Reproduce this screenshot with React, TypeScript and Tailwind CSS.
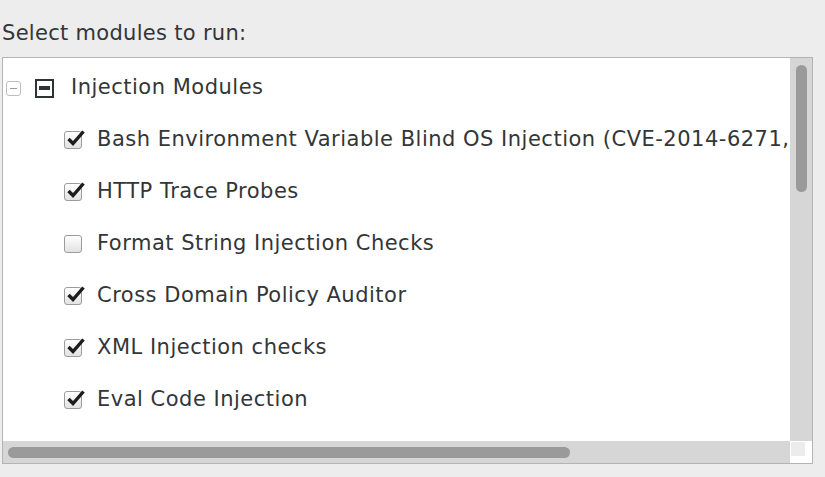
import React from 'react';

const modules: { label: string; checked: boolean }[] = [
  { label: 'Bash Environment Variable Blind OS Injection (CVE-2014-6271, CVE-2014-7169)', checked: true },
  { label: 'HTTP Trace Probes', checked: true },
  { label: 'Format String Injection Checks', checked: false },
  { label: 'Cross Domain Policy Auditor', checked: true },
  { label: 'XML Injection checks', checked: true },
  { label: 'Eval Code Injection', checked: true },
  { label: 'LDAP Injection', checked: false },
];

function CheckBox({ checked }: { checked: boolean }) {
  return (
    <span className="relative flex h-[18px] w-[18px] shrink-0 rounded-[3px] border border-[#9c9c9c] bg-gradient-to-b from-white to-[#e2e2e2]">
      {checked && (
        <svg className="absolute left-[1px] top-[-3px]" width="20" height="18" viewBox="0 0 20 18">
          <path d="M2.5 10 L7 14.5 L17.5 2.5" fill="none" stroke="#1c1c1c" strokeWidth="3.4" strokeLinejoin="miter" strokeLinecap="butt" />
        </svg>
      )}
    </span>
  );
}

export default function App() {
  return (
    <div className="h-[477px] w-[825px] overflow-hidden bg-[#ededed] font-['DejaVu_Sans',sans-serif] text-[#333637]">
      <div className="pl-[2px] pt-[19px] text-[21px] leading-[28px] tracking-[0.3px]">Select modules to run:</div>
      <div className="ml-[2px] mt-[10px] grid h-[407px] w-[811px] grid-cols-[1fr_22px] grid-rows-[1fr_22px] border border-[#b4b4b4] bg-white">
        <div className="overflow-hidden pt-[4px] text-[21px] tracking-[0.5px]">
          <div className="flex h-[52px] items-center whitespace-nowrap">
            <span className="ml-[3px] flex h-[15px] w-[15px] items-center justify-center rounded-[3px] border border-[#bdbdbd]">
              <span className="h-[1px] w-[7px] bg-[#9a9a9a]" />
            </span>
            <span className="ml-[14px] flex h-[19px] w-[19px] items-center justify-center border-2 border-[#2e3436]">
              <span className="h-[4px] w-[11px] bg-[#2e3436]" />
            </span>
            <span className="ml-[17px]">Injection Modules</span>
          </div>
          {modules.map((m) => (
            <div key={m.label} className="flex h-[52px] items-center whitespace-nowrap pl-[61px]">
              <CheckBox checked={m.checked} />
              <span className="ml-[15px]">{m.label}</span>
            </div>
          ))}
        </div>
        <div className="flex justify-center bg-[#d6d6d6] pt-[7px]">
          <div className="h-[127px] w-[11px] rounded-full bg-[#9a9a9a]" />
        </div>
        <div className="flex items-center bg-[#d6d6d6] pl-[5px]">
          <div className="h-[11px] w-[562px] rounded-full bg-[#9a9a9a]" />
        </div>
        <div className="bg-white p-[1px]">
          <div className="h-[14px] w-[14px] bg-[#ececec]" />
        </div>
      </div>
    </div>
  );
}
